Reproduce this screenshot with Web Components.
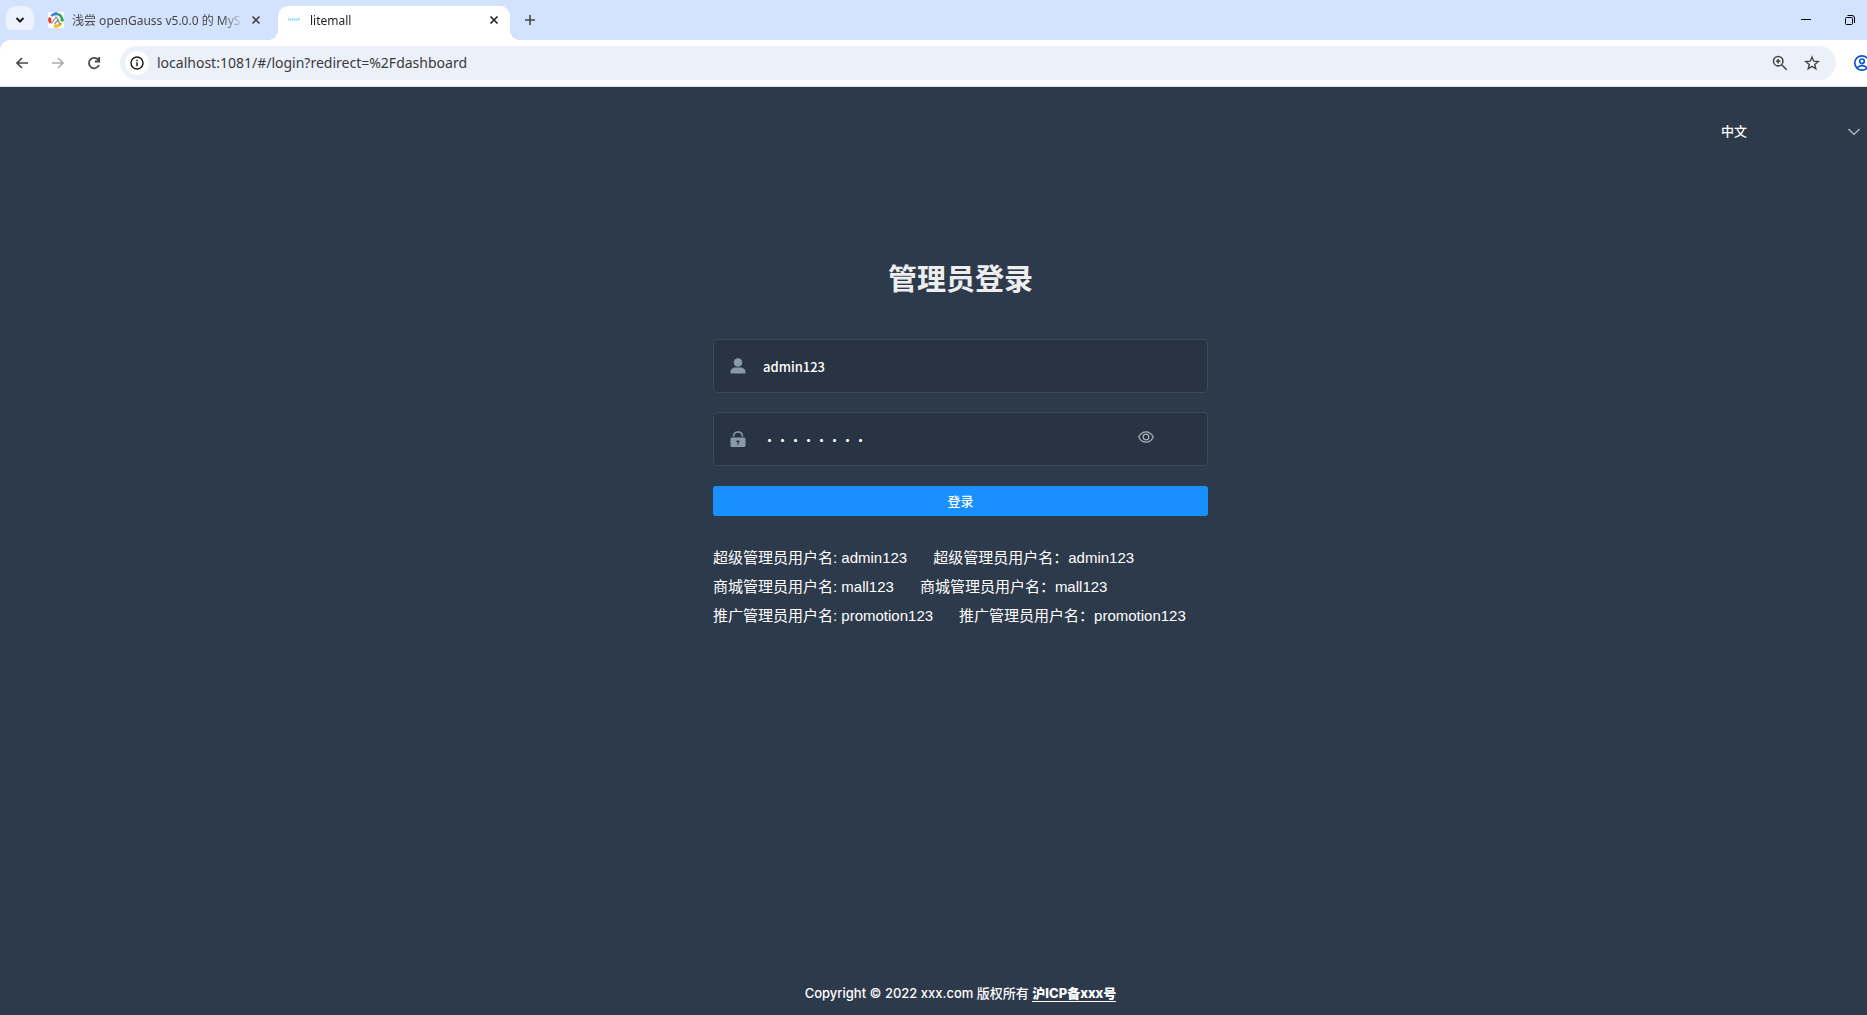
<!DOCTYPE html>
<html lang="zh-CN">
<head>
<meta charset="utf-8">
<title>litemall</title>
<style>
  html, body {
    height: 100%;
    margin: 0;
  }

  body {
    display: flex;
    flex-direction: column;
    overflow: hidden;
    background: #2d3a4b;
    font-family: "Noto Sans", "Noto Sans CJK SC", sans-serif;
  }

  login-page {
    flex: 1;
  }
</style>
</head>
<body>
  <browser-tabs>
    <browser-tab name="浅尝 openGauss v5.0.0 的 MyS">
      <svg slot="icon" width="16" height="16" viewBox="0 0 16 16">
        <rect width="16" height="16" fill="#fff"/>
        <g fill="none" stroke-width="3">
          <path d="M3.500 4.200A6 6 0 0 1 8 2" stroke="#3b7ded"/>
          <path d="M9 2.100A6 6 0 0 1 13.800 7" stroke="#35a853"/>
          <path d="M13 10.800A6 6 0 0 1 6 13.600" stroke="#f8b90c"/>
          <path d="M2.800 11A6 6 0 0 1 2.300 5.500" stroke="#e94335"/>
        </g>
        <circle cx="8" cy="8" r="4.800" fill="#fff"/>
        <path d="M3.500 11.500 8 5l3 4M6.500 12l3-3.500 3 4" fill="none" stroke="#8b8f96" stroke-width="1.300"/>
        <circle cx="8" cy="1.800" r="1.800" fill="#3b7ded"/>
        <circle cx="14.200" cy="8" r="1.800" fill="#35a853"/>
        <circle cx="8" cy="14" r="1.800" fill="#f8b90c"/>
        <circle cx="1.800" cy="8" r="1.800" fill="#e94335"/>
      </svg>
    </browser-tab>
    <browser-tab name="litemall" active>
      <svg slot="icon" width="14" height="16" viewBox="0 0 14 16">
        <path d="M0 7.500h12" stroke="#6fd0f5" stroke-width="2" stroke-dasharray="1.500 .5" opacity=".8"/>
        <path d="M0 6h1M4 6h1M10 6h2" stroke="#a5e1f8"/>
      </svg>
    </browser-tab>
  </browser-tabs>
  <browser-toolbar url="localhost:1081/#/login?redirect=%2Fdashboard"></browser-toolbar>

  <login-page>
    <lang-select slot="lang"></lang-select>
    <login-form heading="管理员登录">
      <login-field label="用户名" type="text" value="admin123">
        <svg slot="icon" width="16" height="16" viewBox="0 0 16 16" fill="#889aa4">
          <circle cx="8" cy="4.500" r="4.300"/>
          <path d="M.5 15.500V14c0-3 2.500-4.500 5-4.500h5c2.500 0 5 1.500 5 4.500v1.500z"/>
        </svg>
      </login-field>
      <login-field label="密码" type="password" value="admin123">
        <svg slot="icon" width="16" height="16" viewBox="0 0 16 16">
          <path d="M3.500 5.500C3.500 2.500 5.500 1 8 1s4.500 1.500 4.500 4.500" fill="none" stroke="#889aa4" stroke-width="1.600"/>
          <rect x=".5" y="6.500" width="15" height="9.500" rx="1.500" fill="#889aa4"/>
          <path d="M6.500 9.500h3v1.500l-1 .5v2.500h-1v-2.500l-1-.5z" fill="#283443"/>
        </svg>
      </login-field>
    </login-form>
    <account-hint role="超级管理员" user="admin123" slot="hints"></account-hint>
    <account-hint role="商城管理员" user="mall123" slot="hints"></account-hint>
    <account-hint role="推广管理员" user="promotion123" slot="hints"></account-hint>
    <copyright-bar slot="footer">Copyright © 2022 xxx.com 版权所有</copyright-bar>
  </login-page>

<script>
class BrowserTabs extends HTMLElement {
  constructor() {
    super();
    this.attachShadow({ mode: "open" });
    this.shadowRoot.innerHTML = `
      <style>
        :host {
          display: flex;
          height: 40px;
          background: #d3e3fd;
        }

        button {
          display: flex;
          align-items: center;
          justify-content: center;
          padding: 0;
          border: 0;
          background: none;
          color: #1f1f1f;
        }

        .search {
          width: 28px;
          height: 28px;
          margin: 6px 4px 0 6px;
          border-radius: 10px;
          background: #ecf2fe;
        }

        .add {
          width: 28px;
          height: 28px;
          margin: 6px 0 0 6px;
        }

        .window {
          display: flex;
          margin-left: auto;
        }

        .window button {
          width: 45px;
          height: 40px;
        }

        .window button:last-child {
          width: 39px;
          padding-left: 4px;
        }
      </style>
      <button class="search" aria-label="Search tabs">
        <svg width="10" height="10" viewBox="0 0 10 10" fill="none" stroke="currentColor" stroke-width="2"><path d="M1.500 3 5 6.500 8.500 3"/></svg>
      </button>
      <slot></slot>
      <button class="add" aria-label="New tab">
        <svg width="10" height="10" viewBox="0 0 10 10" stroke="#474747" stroke-width="1.600"><path d="M5 0v10M0 5h10"/></svg>
      </button>
      <div class="window">
        <button aria-label="Minimize">
          <svg width="10" height="10" viewBox="0 0 10 10" stroke="#000"><path d="M0 4.500h10"/></svg>
        </button>
        <button aria-label="Restore">
          <svg width="10" height="10" viewBox="0 0 10 10" fill="none" stroke="#000"><rect x=".5" y="2.500" width="7" height="7" rx="1"/><path d="M2.500 .5H7A2.500 2.500 0 0 1 9.500 3v5"/></svg>
        </button>
      </div>
    `;
  }
}

class BrowserTab extends HTMLElement {
  constructor() {
    super();
    this.attachShadow({ mode: "open" });
    this.shadowRoot.innerHTML = `
      <style>
        :host {
          position: relative;
          display: flex;
          align-items: center;
          box-sizing: border-box;
          width: 240px;
          height: 34px;
          margin-top: 6px;
          padding: 0 14px 6px 10px;
          color: #474747;
          font-size: 12px;
        }

        :host([active]) {
          width: 232px;
          padding-right: 8px;
          border-radius: 10px 10px 0 0;
          background: #fff;
          color: #1f1f1f;
        }

        /* the flared feet of the open tab */
        :host([active])::before,
        :host([active])::after {
          content: "";
          position: absolute;
          bottom: 0;
          width: 10px;
          height: 10px;
        }

        :host([active])::before {
          left: -10px;
          background: radial-gradient(circle at 0 0, transparent 10px, #fff 10px);
        }

        :host([active])::after {
          right: -10px;
          background: radial-gradient(circle at 100% 0, transparent 10px, #fff 10px);
        }

        span {
          flex: 1;
          margin-left: 8px;
          padding-top: 2px;
          white-space: nowrap;
          line-height: 20px;
          -webkit-mask: linear-gradient(90deg, #000 150px, transparent 172px);
        }

        button {
          display: flex;
          padding: 3px;
          border: 0;
          background: none;
          color: inherit;
        }
      </style>
      <slot name="icon"></slot>
      <span></span>
      <button aria-label="Close"><svg width="10" height="10" viewBox="0 0 10 10" stroke="currentColor" stroke-width="1.600"><path d="M1.500 1.500l7 7M8.500 1.500l-7 7"/></svg></button>
    `;
    this.shadowRoot.querySelector("span").innerText = this.getAttribute("name");
  }
}

class BrowserToolbar extends HTMLElement {
  constructor() {
    super();
    this.attachShadow({ mode: "open" });
    this.shadowRoot.innerHTML = `
      <style>
        :host {
          display: flex;
          align-items: center;
          height: 46px;
          border-bottom: 1px solid #dcdfe4;
          border-radius: 10px 0 0 0;
          background: #fff;
          box-shadow: -10px -10px 0 #d3e3fd;
          overflow: hidden;
        }

        nav {
          display: flex;
          gap: 12px;
          padding: 0 14px 0 10px;
        }

        button {
          display: flex;
          align-items: center;
          justify-content: center;
          flex: none;
          width: 24px;
          height: 24px;
          padding: 0;
          border: 0;
          background: none;
          color: #474747;
        }

        .address {
          display: flex;
          flex: 1;
          align-items: center;
          gap: 8px;
          height: 34px;
          padding: 0 12px 0 5px;
          border-radius: 17px;
          background: #ecf0f9;
        }

        .info {
          border-radius: 12px;
          background: #fff;
          color: #1f1f1f;
        }

        input {
          flex: 1;
          padding: 0 0 2px;
          border: 0;
          outline: 0;
          background: none;
          color: #3a3a3a;
          font: inherit;
          font-size: 14px;
        }

        .account {
          width: 31px;
          padding-left: 17px;
          justify-content: flex-start;
        }

        .account svg {
          flex: none;
        }
      </style>
      <nav>
        <button aria-label="Back"><svg width="12" height="12" viewBox="0 0 12 12" fill="none" stroke="currentColor" stroke-width="1.600"><path d="M12 6H1M6 1 1 6l5 5"/></svg></button>
        <button aria-label="Forward"><svg width="12" height="12" viewBox="0 0 12 12" fill="none" stroke="#adadad" stroke-width="1.600"><path d="M0 6h11M6 1l5 5-5 5"/></svg></button>
        <button aria-label="Reload"><svg width="14" height="14" viewBox="0 0 14 14" fill="none" stroke="currentColor" stroke-width="1.800"><path d="M12 9a5.200 5.200 0 1 1-.8-5.200L12.200 5M12.200 1v4.500H7.800"/></svg></button>
      </nav>
      <div class="address">
        <button class="info" aria-label="Site information">
          <svg width="14" height="14" viewBox="0 0 14 14" fill="none" stroke="currentColor" stroke-width="1.500"><circle cx="7" cy="7" r="6"/><path d="M7 6.200v4M7 3.800v1.400"/></svg>
        </button>
        <input type="text" aria-label="Address" spellcheck="false">
        <button aria-label="Zoom">
          <svg width="16" height="16" viewBox="0 0 16 16" fill="none" stroke="currentColor" stroke-width="1.600"><circle cx="6.200" cy="6.200" r="4.700"/><path d="M9.700 9.700l5 5"/><path d="M6.200 4v4.400M4 6.200h4.400"/></svg>
        </button>
        <button aria-label="Bookmark">
          <svg width="16" height="16" viewBox="0 0 16 16" fill="none" stroke="currentColor" stroke-width="1.400"><path d="M8 2l1.700 4.200 4.500.3-3.500 2.900 1.100 4.400L8 11.400l-3.800 2.400 1.100-4.400-3.500-2.900 4.500-.3z"/></svg>
        </button>
      </div>
      <button class="account" aria-label="Account">
        <svg width="18" height="18" viewBox="0 0 18 18" fill="none" stroke="#0b57d0" stroke-width="1.700"><circle cx="9" cy="9" r="7.200"/><circle cx="9" cy="7.300" r="2.300"/><path d="M4 14c1.300-1.600 3-2.300 5-2.300s3.700.7 5 2.300"/></svg>
      </button>
    `;
    this.shadowRoot.querySelector("input").value = this.getAttribute("url");
  }
}

class LoginPage extends HTMLElement {
  constructor() {
    super();
    this.attachShadow({ mode: "open" });
    this.shadowRoot.innerHTML = `
      <style>
        :host {
          display: flex;
          flex-direction: column;
          color: #fff;
        }

        header {
          display: flex;
          justify-content: flex-end;
          padding-top: 22px;
        }

        main,
        footer {
          display: flex;
          flex-direction: column;
          align-items: center;
          padding-left: 54px;
        }

        main {
          padding-top: 104px;
        }

        .column {
          width: 100%;
          max-width: 495px;
        }

        .hints {
          display: flex;
          flex-direction: column;
          margin-top: 27px;
        }

        footer {
          margin-top: auto;
          padding-bottom: 11px;
        }
      </style>
      <header><slot name="lang"></slot></header>
      <main>
        <div class="column">
          <slot></slot>
          <div class="hints"><slot name="hints"></slot></div>
        </div>
      </main>
      <footer><slot name="footer"></slot></footer>
    `;
  }
}

class LangSelect extends HTMLElement {
  constructor() {
    super();
    this.attachShadow({ mode: "open" });
    this.shadowRoot.innerHTML = `
      <style>
        :host {
          display: flex;
          align-items: center;
          width: 162px;
          height: 44px;
          padding-right: 5px;
        }

        select {
          flex: 1;
          height: 44px;
          padding: 0 0 2px 21px;
          border: 0;
          outline: 0;
          appearance: none;
          background: none;
          color: #fff;
          font: 500 13px "Noto Sans CJK SC", sans-serif;
        }

        svg {
          flex: none;
          margin-right: 2px;
          pointer-events: none;
        }
      </style>
      <select aria-label="语言">
        <option>中文</option>
      </select>
      <svg width="12" height="12" viewBox="0 0 12 12" fill="none" stroke="#c0c4cc" stroke-width="1.200"><path d="M.5 4 6 9.500 11.500 4"/></svg>
    `;
  }
}

class LoginForm extends HTMLElement {
  constructor() {
    super();
    this.attachShadow({ mode: "open" });
    this.shadowRoot.innerHTML = `
      <style>
        :host {
          display: block;
        }

        form {
          display: flex;
          flex-direction: column;
          gap: 19px;
        }

        h3 {
          margin: 0 0 23px;
          color: #eee;
          font: bold 29px/40px "Noto Sans CJK SC", sans-serif;
          text-align: center;
        }

        button {
          height: 30px;
          margin-top: 1px;
          padding: 0 0 1px;
          border: 0;
          border-radius: 3px;
          background: #1890ff;
          color: #fff;
          font: 500 13px "Noto Sans CJK SC", sans-serif;
        }
      </style>
      <form>
        <h3></h3>
        <slot></slot>
        <button type="button">登录</button>
      </form>
    `;
    this.shadowRoot.querySelector("h3").innerText = this.getAttribute("heading");
  }
}

class LoginField extends HTMLElement {
  constructor() {
    super();
    this.attachShadow({ mode: "open" });
    this.shadowRoot.innerHTML = `
      <style>
        :host {
          display: flex;
          align-items: center;
          box-sizing: border-box;
          height: 54px;
          padding: 0 53px 0 16px;
          border: 1px solid #3e4957;
          border-radius: 5px;
          background: #283443;
        }

        label {
          display: flex;
          flex: none;
        }

        input {
          flex: 1;
          min-width: 0;
          height: 50px;
          margin-left: 17px;
          padding: 0;
          border: 0;
          outline: 0;
          background: none;
          color: #fff;
          font: 500 13px "Noto Sans CJK SC", sans-serif;
        }

        button {
          display: none;
          padding: 0;
          border: 0;
          background: none;
        }

        :host([type="password"]) button {
          display: flex;
          padding-bottom: 4px;
        }
      </style>
      <label for="field"><slot name="icon"></slot></label>
      <input id="field">
      <button type="button" aria-label="显示密码">
        <svg width="16" height="16" viewBox="0 0 16 16" fill="none" stroke="#aab2bd" stroke-width="1.200"><path d="M.7 8C2.500 4.500 5 2.800 8 2.800S13.500 4.500 15.300 8C13.500 11.500 11 13.200 8 13.200S2.500 11.500 .7 8z"/><circle cx="8" cy="8" r="2.800"/></svg>
      </button>
    `;
    const input = this.shadowRoot.querySelector("input");
    input.type = this.getAttribute("type");
    input.value = this.getAttribute("value");
    input.setAttribute("aria-label", this.getAttribute("label"));
  }
}

class AccountHint extends HTMLElement {
  constructor() {
    super();
    this.attachShadow({ mode: "open" });
    const role = this.getAttribute("role");
    const user = this.getAttribute("user");
    this.shadowRoot.innerHTML = `
      <style>
        :host {
          display: flex;
          gap: 26px;
          font: 15px/29px "Liberation Sans", "Noto Sans CJK SC", sans-serif;
          white-space: nowrap;
        }
      </style>
      <span>${role}用户名: ${user}</span>
      <span>${role}用户名：${user}</span>
    `;
  }
}

class CopyrightBar extends HTMLElement {
  constructor() {
    super();
    this.attachShadow({ mode: "open" });
    this.shadowRoot.innerHTML = `
      <style>
        :host {
          display: block;
          font: 500 13px/22px Inter, "Noto Sans CJK SC", sans-serif;
        }

        a {
          border-bottom: 1px solid #fff;
          color: #fff;
          font-weight: 800;
          text-decoration: none;
        }
      </style>
      <slot></slot>
      <a href="#icp">沪ICP备xxx号</a>
    `;
  }
}

window.customElements.define("browser-tabs", BrowserTabs);
window.customElements.define("browser-tab", BrowserTab);
window.customElements.define("browser-toolbar", BrowserToolbar);
window.customElements.define("login-page", LoginPage);
window.customElements.define("lang-select", LangSelect);
window.customElements.define("login-form", LoginForm);
window.customElements.define("login-field", LoginField);
window.customElements.define("account-hint", AccountHint);
window.customElements.define("copyright-bar", CopyrightBar);
</script>
</body>
</html>
